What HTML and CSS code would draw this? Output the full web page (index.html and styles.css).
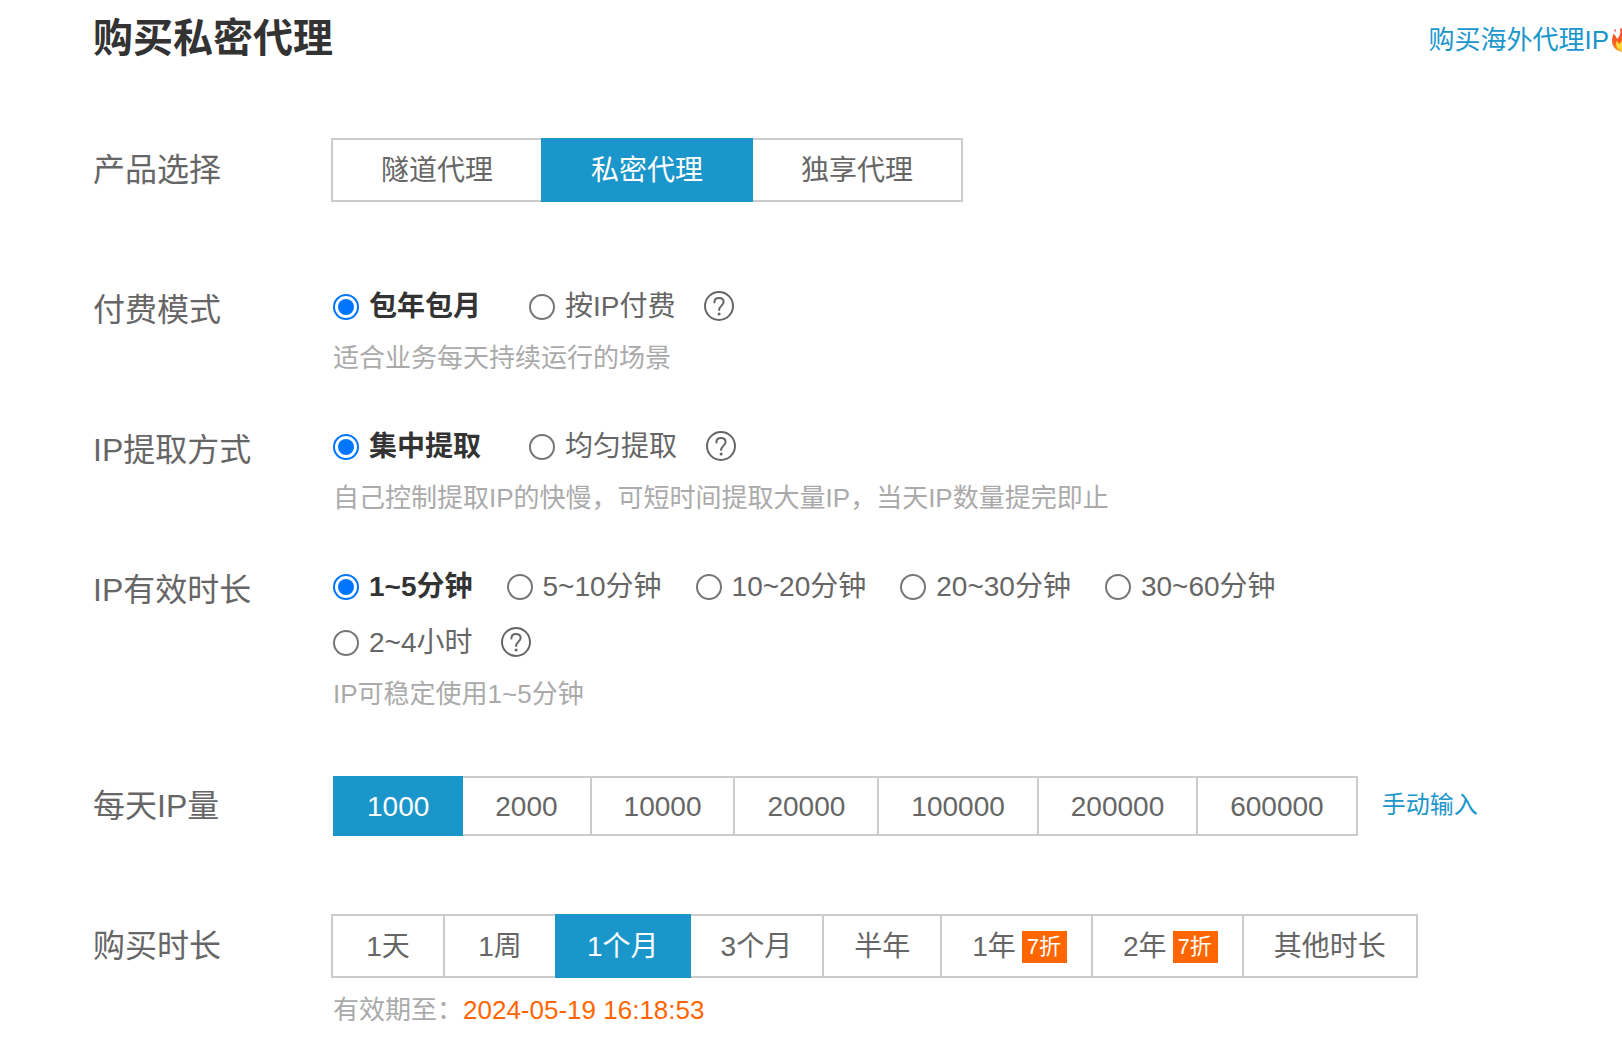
FILE: index.html
```html
<!DOCTYPE html>
<html lang="zh-CN">
<head>
<meta charset="utf-8">
<meta name="viewport" content="width=device-width, initial-scale=1">
<title>购买私密代理</title>
<link rel="stylesheet" href="styles.css">
</head>
<body>
<svg class="sprite" aria-hidden="true">
  <symbol id="help" viewBox="0 0 30 30">
    <circle cx="15" cy="15" r="14" fill="none" stroke="currentColor" stroke-width="2"/>
    <path d="M10.4 11.4C10.4 8.8 12.3 7 15 7s4.6 1.7 4.6 4.1c0 3.3-4.5 3.9-4.5 7.9" fill="none" stroke="currentColor" stroke-width="2" stroke-linecap="round"/>
    <circle cx="15.1" cy="22.9" r="1.5" fill="currentColor"/>
  </symbol>
</svg>
<header class="header">
  <h1 class="title">购买私密代理</h1>
  <a class="overseas" href="#">购买海外代理IP<svg class="flame" viewBox="0 0 26 26" aria-hidden="true">
    <defs>
      <linearGradient id="fire" x1="0" y1="0" x2="0" y2="1"><stop offset="0" stop-color="#f0452a"/><stop offset="0.6" stop-color="#f9601f"/><stop offset="1" stop-color="#ff9a1c"/></linearGradient>
    </defs>
    <path d="M8 1c6 2 8 6 8 9 2-1 2-2 2-4 4 3 6 7 6 10 0 5-5 9-12 9S0 20 0 14c0-3 1-5 1-7 2 1 3 2 4 5C8 9 9 6 8 1z" fill="url(#fire)"/>
    <path d="M3 2c1 1 1 2 0 3-1-1-1-2 0-3z" fill="#f0452a"/>
    <path d="M10 8c1 4 9 7 9 12 0 3-3 4-7 4s-8-3-8-7c0-1 0-2 1-3 1 1 1 2 2 3 3-2 4-5 3-9z" fill="#ffd83b"/>
  </svg></a>
</header>
<main class="form">
  <section class="row row-product">
    <h2 class="label" id="l-product">产品选择</h2>
    <div class="segments segments-outset" role="group" aria-labelledby="l-product">
      <button class="segment segment-wide" type="button">隧道代理</button>
      <button class="segment segment-wide active" type="button" aria-pressed="true">私密代理</button>
      <button class="segment segment-wide" type="button">独享代理</button>
    </div>
  </section>

  <section class="row row-mode">
    <h2 class="label" id="l-mode">付费模式</h2>
    <div>
      <div class="options options-loose" role="radiogroup" aria-labelledby="l-mode">
        <label class="option"><input class="radio" type="radio" name="mode" checked><span>包年包月</span></label>
        <label class="option"><input class="radio" type="radio" name="mode"><span>按IP付费</span></label>
        <button class="help" type="button" aria-label="帮助"><svg width="30" height="30"><use href="#help"/></svg></button>
      </div>
      <p class="hint">适合业务每天持续运行的场景</p>
    </div>
  </section>

  <section class="row row-extract">
    <h2 class="label" id="l-extract">IP提取方式</h2>
    <div>
      <div class="options options-loose" role="radiogroup" aria-labelledby="l-extract">
        <label class="option"><input class="radio" type="radio" name="extract" checked><span>集中提取</span></label>
        <label class="option"><input class="radio" type="radio" name="extract"><span>均匀提取</span></label>
        <button class="help" type="button" aria-label="帮助"><svg width="30" height="30"><use href="#help"/></svg></button>
      </div>
      <p class="hint">自己控制提取IP的快慢，可短时间提取大量IP，当天IP数量提完即止</p>
    </div>
  </section>

  <section class="row row-life">
    <h2 class="label" id="l-life">IP有效时长</h2>
    <div>
      <div class="options options-life" role="radiogroup" aria-labelledby="l-life">
        <label class="option"><input class="radio" type="radio" name="life" checked><span>1~5分钟</span></label>
        <label class="option"><input class="radio" type="radio" name="life"><span>5~10分钟</span></label>
        <label class="option"><input class="radio" type="radio" name="life"><span>10~20分钟</span></label>
        <label class="option"><input class="radio" type="radio" name="life"><span>20~30分钟</span></label>
        <label class="option"><input class="radio" type="radio" name="life"><span>30~60分钟</span></label>
        <label class="option"><input class="radio" type="radio" name="life"><span>2~4小时</span></label>
        <button class="help" type="button" aria-label="帮助"><svg width="30" height="30"><use href="#help"/></svg></button>
      </div>
      <p class="hint">IP可稳定使用1~5分钟</p>
    </div>
  </section>

  <section class="row row-amount">
    <h2 class="label" id="l-amount">每天IP量</h2>
    <div class="amount">
      <div class="segments" role="group" aria-labelledby="l-amount">
        <button class="segment segment-short active" type="button" aria-pressed="true">1000</button>
        <button class="segment segment-short" type="button">2000</button>
        <button class="segment segment-short" type="button">10000</button>
        <button class="segment segment-short" type="button">20000</button>
        <button class="segment segment-short" type="button">100000</button>
        <button class="segment segment-short" type="button">200000</button>
        <button class="segment segment-short" type="button">600000</button>
      </div>
      <a class="manual" href="#">手动输入</a>
    </div>
  </section>

  <section class="row row-period">
    <h2 class="label" id="l-period">购买时长</h2>
    <div>
      <div class="segments segments-outset" role="group" aria-labelledby="l-period">
        <button class="segment" type="button">1天</button>
        <button class="segment" type="button">1周</button>
        <button class="segment active" type="button" aria-pressed="true">1个月</button>
        <button class="segment" type="button">3个月</button>
        <button class="segment" type="button">半年</button>
        <button class="segment segment-sale" type="button">1年<span class="badge">7折</span></button>
        <button class="segment segment-sale" type="button">2年<span class="badge">7折</span></button>
        <button class="segment" type="button">其他时长</button>
      </div>
      <p class="hint expiry">有效期至：<time class="date" datetime="2024-05-19T16:18:53">2024-05-19 16:18:53</time></p>
    </div>
  </section>
</main>
</body>
</html>
```
FILE: styles.css
```css
* {
  box-sizing: border-box;
}

body {
  margin: 0;
  overflow-x: hidden;
  background: #fff;
  color: #666;
  font-family: "Liberation Sans", "Noto Sans CJK SC", sans-serif;
  font-size: 28px;
}

button {
  font: inherit;
  color: inherit;
  cursor: pointer;
}

a {
  color: #1a96cb;
  text-decoration: none;
}

.sprite {
  position: absolute;
  width: 0;
  height: 0;
}

.header {
  display: flex;
  justify-content: space-between;
  height: 68px;
  padding: 8px 0 0 93px;
}

.title {
  margin: 0;
  color: #333;
  font-size: 40px;
  line-height: 60px;
}

/* The flame runs past the right edge of the page. */
.overseas {
  display: flex;
  align-items: center;
  gap: 3px;
  height: 64px;
  margin-right: -16px;
  font-size: 26px;
  line-height: 64px;
  white-space: nowrap;
}

.flame {
  width: 26px;
  height: 26px;
}

.form {
  padding-left: 93px;
}

.row {
  display: grid;
  grid-template-columns: 240px minmax(0, 1fr);
}

.row-product {
  margin-top: 70px;
}

.row-mode {
  margin-top: 77px;
}

.row-extract,
.row-life {
  margin-top: 38px;
}

.row-amount {
  margin-top: 59px;
}

.row-period {
  margin-top: 78px;
}

.label {
  margin: 0;
  font-size: 32px;
  font-weight: 400;
  line-height: 62px;
}

.row-product .label,
.row-period .label {
  line-height: 64px;
}

.row-amount .label {
  line-height: 60px;
}

.options {
  display: flex;
  flex-wrap: wrap;
  column-gap: 34px;
}

.options-loose {
  column-gap: 48px;
}

.options-life {
  max-width: 1060px;
}

.option {
  display: flex;
  align-items: center;
  gap: 10px;
  line-height: 56px;
}

.radio {
  appearance: none;
  width: 26px;
  height: 26px;
  margin: 0;
  padding: 3px;
  border: 2px solid #767676;
  border-radius: 50%;
}

.radio:checked {
  border-color: #0075ff;
  background: #0075ff content-box;
}

.radio:checked + span {
  color: #333;
  font-weight: 700;
}

.help {
  display: flex;
  align-items: center;
  height: 54px;
  margin-left: -6px;
  padding: 0;
  border: 0;
  background: none;
}

.options-loose .help {
  margin-left: -19px;
}

.hint {
  margin: 0;
  color: #aaa;
  font-size: 26px;
  line-height: 46px;
}

.expiry {
  margin-top: 9px;
}

.date {
  color: #f60;
}

.segments {
  display: flex;
}

.segments-outset {
  margin-left: -2px;
}

.segment {
  display: flex;
  align-items: center;
  justify-content: center;
  min-width: 114px;
  height: 64px;
  padding: 2px 30px 0;
  border: 2px solid #ccc;
  background: #fff;
  line-height: 58px;
  white-space: nowrap;
}

.segment + .segment {
  margin-left: -2px;
}

.segment.active {
  z-index: 1;
  border-color: #1a96cb;
  background: #1a96cb;
  color: #fff;
}

.segment-wide {
  padding: 2px 48px 0;
}

.segment-short {
  height: 60px;
  padding: 2px 32px 0;
  line-height: 54px;
}

.segment-sale {
  padding-right: 24px;
}

.badge {
  margin-left: 6px;
  padding: 0 6px 0 5px;
  background: #f60;
  color: #fff;
  font-size: 22px;
  line-height: 32px;
}

.amount {
  display: flex;
  gap: 24px;
}

.manual {
  font-size: 24px;
  line-height: 58px;
}
```
